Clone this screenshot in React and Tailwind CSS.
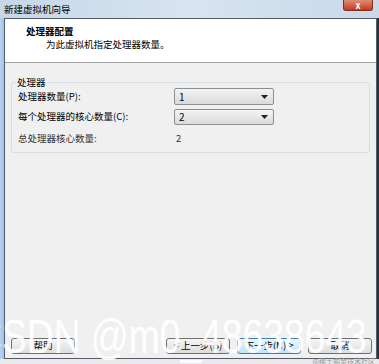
const font = { fontFamily: '"Noto Sans CJK SC", "Liberation Sans", sans-serif' };

function Combo({ value }) {
  return (
    <div className="w-[100px] h-full border border-[#8e8f8f] rounded-[2px] bg-gradient-to-b from-[#f4f4f4] to-[#dadada] flex items-center justify-between pl-[4px] pr-[5px] text-[10px] leading-none text-black">
      <span>{value}</span>
      <svg width="7" height="4" viewBox="0 0 7 4">
        <path d="M0 0h7L3.5 4z" fill="#222" />
      </svg>
    </div>
  );
}

function Btn({ children, focused, className = '' }) {
  return (
    <div
      className={`h-[16px] w-[64px] rounded-[3px] border flex items-center justify-center text-[9.5px] leading-none text-black ${
        focused
          ? 'border-[#3c7fb1] bg-gradient-to-b from-[#eaf6fd] to-[#bee6fd]'
          : 'border-[#707070] bg-gradient-to-b from-[#f6f6f6] to-[#dddddd]'
      } ${className}`}
    >
      {children}
    </div>
  );
}

export default function App() {
  return (
    <div className="relative w-[379px] h-[364px] overflow-hidden bg-[#d3e0ec] flex flex-col" style={font}>
      {/* title bar */}
      <div className="h-[18px] shrink-0 flex items-start justify-between bg-gradient-to-r from-[#c6d7e8] via-[#d8e4ef] to-[#c9d9ea]">
        <span className="pl-[4px] pt-[3px] text-[9.5px] leading-[12px] text-black">新建虚拟机向导</span>
        <div className="mr-[6px] w-[30px] h-[11px] rounded-b-[3px] bg-gradient-to-b from-[#e08a72] to-[#c0391e] border border-[#8b2a17] border-t-0 flex items-center justify-center text-white text-[9px] font-bold leading-none">
          x
        </div>
      </div>

      <div className="flex flex-1">
        <div className="w-[4px] bg-gradient-to-r from-[#b9d3ef] to-[#9fc2ea]" />
        <div className="flex-1 flex flex-col border border-[#545d69] bg-[#f0f0f0]">
          {/* header */}
          <div className="h-[44px] shrink-0 bg-white border-b border-[#a0a0a0] pt-[6px]">
            <div className="pl-[21px] text-[9.5px] font-bold leading-[12px] text-black">处理器配置</div>
            <div className="pl-[41px] pt-[1px] text-[9.5px] leading-[12px] text-black">为此虚拟机指定处理器数量。</div>
          </div>

          {/* group box */}
          <div className="px-[6px] pt-[19px]">
            <div className="relative border border-[#d5dfe5] rounded-[3px] h-[71px] pl-[6px] pt-[5px] flex flex-col text-[9.5px] leading-none text-black">
              <span className="absolute -top-[7px] left-[4px] px-[1px] bg-[#f0f0f0] text-[9.5px] leading-[12px]">处理器</span>
              <div className="flex items-center h-[17px]">
                <span className="w-[156px]">处理器数量(P):</span>
                <Combo value="1" />
              </div>
              <div className="flex items-center h-[16px] mt-[4px]">
                <span className="w-[156px]">每个处理器的核心数量(C):</span>
                <Combo value="2" />
              </div>
              <div className="flex items-center h-[16px] mt-[6px]">
                <span className="w-[158px] text-[#333]">总处理器核心数量:</span>
                <span className="text-[#333]">2</span>
              </div>
            </div>
          </div>

          <div className="flex-1" />

          {/* buttons */}
          <div className="flex items-center pl-[6px] pr-[4px] pb-[4px]">
            <Btn>帮助</Btn>
            <div className="flex-1" />
            <Btn>&lt; 上一步(B)</Btn>
            <Btn focused className="ml-[7px]">下一步(N) &gt;</Btn>
            <Btn className="ml-[7px]">取消</Btn>
          </div>
        </div>
        <div className="w-[2px] bg-[#2a3440]" />
      </div>
      <div className="h-[5px] shrink-0 bg-[#e9e9e9] flex justify-end pr-[4px]">
        <span className="text-[7px] leading-[5px] text-[#9a9a9a]">@稀土掘金技术社区</span>
      </div>

      {/* watermark overlay */}
      <div
        className="absolute left-[-25px] top-[312px] text-[49px] leading-none text-white/90 whitespace-nowrap pointer-events-none origin-left scale-x-[0.76]"
        style={{ fontFamily: '"Liberation Sans", sans-serif' }}
      >
        CSDN @m0_48638643
      </div>
    </div>
  );
}
